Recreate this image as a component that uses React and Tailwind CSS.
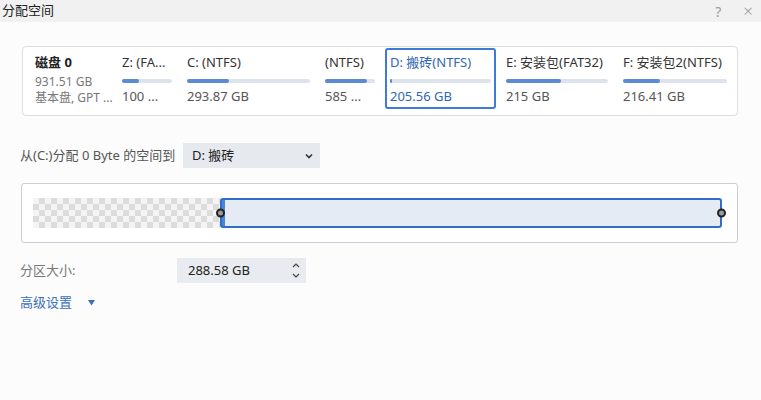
const PARTS = [
  { label: 'Z: (FA...', size: '100 ...', w: 'w-[60px]', fill: 'w-[17px]' },
  { label: 'C: (NTFS)', size: '293.87 GB', w: 'w-[133px]', fill: 'w-[42px]' },
  { label: '(NTFS)', size: '585 ...', w: 'w-[60px]', fill: 'w-[42px]' },
  { label: 'D: 搬砖(NTFS)', size: '205.56 GB', w: 'w-[111px]', fill: 'w-[2px]', active: true },
  { label: 'E: 安装包(FAT32)', size: '215 GB', w: 'w-[112px]', fill: 'w-[55px]' },
  { label: 'F: 安装包2(NTFS)', size: '216.41 GB', w: 'w-[114px]', fill: 'w-[37px]' },
];

const font = { fontFamily: '"Segoe UI", "Noto Sans", "Noto Sans CJK SC", sans-serif' };

function Partition({ p }) {
  return (
    <div
      className={`${p.w} shrink-0 rounded-[3px] border-2 px-[3px] pt-[3px] pb-[2px] ${
        p.active ? 'border-[#3d7bd6] text-[#2f66b3]' : 'border-transparent text-[#333]'
      }`}
    >
      <div className="h-[18px] text-[13px] leading-[18px] whitespace-nowrap">{p.label}</div>
      <div className="mt-[8px] h-[4px] rounded-full bg-[#dde3ec]">
        <div className={`${p.fill} h-full rounded-full bg-[#5b8bd3]`} />
      </div>
      <div className={`mt-[4px] h-[18px] text-[13px] leading-[18px] ${p.active ? 'text-[#2f66b3]' : 'text-[#555]'}`}>
        {p.size}
      </div>
    </div>
  );
}

function Handle() {
  return <div className="h-[9px] w-[9px] rounded-full border-2 border-[#222] bg-[#9a9a9a]" />;
}

export default function App() {
  return (
    <div className="h-[400px] w-[761px] overflow-hidden bg-[#fcfcfc] text-[#333]" style={font}>
      <div className="flex h-[22px] items-center justify-between bg-[#f1f1f1] pl-[2px] pr-[8px]">
        <span className="text-[13px] text-[#222]">分配空间</span>
        <div className="flex items-center gap-[22px] text-[14px] text-[#9a9a9a]">
          <span>?</span>
          <span className="text-[17px] font-light">×</span>
        </div>
      </div>

      <div className="px-[20px]">
        <div className="mt-[24px] ml-[2px] mr-[3px] flex gap-[5px] rounded-[4px] border border-[#dcdcdc] bg-white pt-[1px] pb-[6px] pl-[12px] pr-[3px]">
          <div className="w-[77px] shrink-0 pt-[5px]">
            <div className="h-[18px] text-[13px] font-bold leading-[18px] text-[#222]">磁盘 0</div>
            <div className="mt-[3px] h-[16px] text-[12px] leading-[16px] text-[#777]">931.51 GB</div>
            <div className="h-[16px] text-[12px] leading-[16px] whitespace-nowrap text-[#777]">基本盘, GPT ...</div>
          </div>
          {PARTS.map((p) => (
            <Partition key={p.label} p={p} />
          ))}
        </div>

        <div className="mt-[27px] flex items-center">
          <span className="w-[163px] text-[13px] text-[#555]">从(C:)分配 0 Byte 的空间到</span>
          <div className="flex h-[25px] w-[137px] items-center justify-between bg-[#e6e9ee] pl-[9px] pr-[6px] text-[13px] text-[#222]">
            <span>D: 搬砖</span>
            <svg width="10" height="10" viewBox="0 0 10 10" fill="none" stroke="#333" strokeWidth="1.6">
              <path d="M2 3.5 L5 6.5 L8 3.5" />
            </svg>
          </div>
        </div>

        <div className="mt-[15px] ml-[1px] mr-[3px] h-[60px] rounded-[3px] border border-[#c9ced6] bg-white pt-[14px] pl-[11px] pr-[15px]">
          <div className="flex h-[30px] items-center">
            <div className="h-[30px] w-[187px] bg-[conic-gradient(#dcdcdc_25%,#f4f4f4_0_50%,#dcdcdc_0_75%,#f4f4f4_0)] bg-[length:12px_12px]" />
            <div className="relative flex h-[30px] flex-1 rounded-[3px] border-2 border-[#2f6fca] bg-[#e5ebf5]">
              <div className="h-full w-[3px] bg-[#4b83d6]" />
              <div className="absolute -left-[6px] top-1/2 -translate-y-1/2">
                <Handle />
              </div>
              <div className="absolute -right-[6px] top-1/2 -translate-y-1/2">
                <Handle />
              </div>
            </div>
          </div>
        </div>

        <div className="mt-[15px] flex items-center">
          <span className="w-[157px] text-[13px] text-[#777]">分区大小:</span>
          <div className="flex h-[25px] w-[129px] items-center justify-between bg-[#e8ebef] pl-[11px] pr-[6px] text-[13px] text-[#222]">
            <span>288.58 GB</span>
            <div className="flex flex-col gap-[5px]">
              <svg width="8" height="5" viewBox="0 0 8 5" fill="none" stroke="#444" strokeWidth="1.2">
                <path d="M1 4 L4 1 L7 4" />
              </svg>
              <svg width="8" height="5" viewBox="0 0 8 5" fill="none" stroke="#444" strokeWidth="1.2">
                <path d="M1 1 L4 4 L7 1" />
              </svg>
            </div>
          </div>
        </div>

        <div className="mt-[10px] flex items-center text-[13px] text-[#3a6fba]">
          <span>高级设置</span>
          <svg className="ml-[16px]" width="7" height="6" viewBox="0 0 7 6" fill="#3a6fba">
            <path d="M0 0 H7 L3.5 5.5 Z" />
          </svg>
        </div>
      </div>
    </div>
  );
}
